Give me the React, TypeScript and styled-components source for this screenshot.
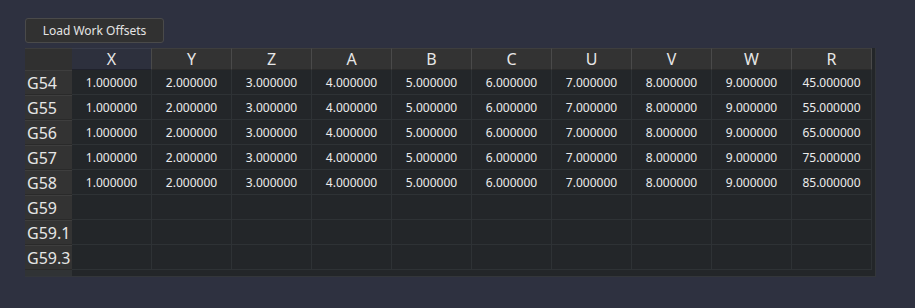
import React from 'react';
import styled, { createGlobalStyle } from 'styled-components';

const GlobalStyle = createGlobalStyle`
  html, body {
    margin: 0;
    padding: 0;
    background: #2e3140;
    font-family: "Noto Sans", "Open Sans", sans-serif;
  }
`;

const Page = styled.div`
  width: 915px;
  height: 308px;
  box-sizing: border-box;
  padding: 18px 0 0 25px;
  display: flex;
  flex-direction: column;
  align-items: flex-start;
  gap: 5px;
`;

const LoadButton = styled.button`
  width: 139px;
  height: 25px;
  box-sizing: border-box;
  background: #313131;
  border: 1px solid #4a4a4a;
  border-radius: 3px;
  color: #e4e4e4;
  font-family: inherit;
  font-size: 12px;
  padding: 0;
`;

const Frame = styled.div`
  width: 851px;
  height: 229px;
  box-sizing: border-box;
  background: #2b2e31;
  border: 1px solid #33363a;
  border-top: none;
  border-left: none;
`;

const Grid = styled.div`
  display: grid;
  grid-template-columns: 47px repeat(10, 80px);
  grid-template-rows: 22px repeat(8, 25px) 6px;
  background: #232629;
`;

const Corner = styled.div`
  background: #303030;
  border-top: 1px solid #3c3c3c;
`;

const ColHeader = styled.div<{ $active?: boolean }>`
  display: flex;
  align-items: center;
  justify-content: center;
  background: ${p => (p.$active ? '#2d303d' : '#333333')};
  border-top: 1px solid ${p => (p.$active ? '#393c4a' : '#3e3e3e')};
  border-right: 1px solid #4a4a4a;
  border-bottom: 1px solid ${p => (p.$active ? '#20222c' : '#2a2a2a')};
  box-sizing: border-box;
  color: #e6e6e6;
  font-size: 16px;
`;

const RowHeader = styled.div`
  display: flex;
  align-items: center;
  padding-left: 2px;
  background: #333333;
  border-top: 1px solid #3e3e3e;
  border-bottom: 1px solid #2a2a2a;
  box-sizing: border-box;
  color: #e6e6e6;
  font-size: 16px;
`;

const Cell = styled.div`
  display: flex;
  align-items: center;
  justify-content: center;
  border-right: 1px solid #2e3235;
  border-bottom: 1px solid #2e3235;
  box-sizing: border-box;
  color: #ececec;
  font-size: 12px;
`;

const FooterCorner = styled.div`
  background: #303335;
`;

const FooterStrip = styled.div`
  background: #232629;
  grid-column: span 10;
`;

const axes = ['X', 'Y', 'Z', 'A', 'B', 'C', 'U', 'V', 'W', 'R'];
const rows = ['G54', 'G55', 'G56', 'G57', 'G58', 'G59', 'G59.1', 'G59.3'];
const rValues: Record<string, number> = { G54: 45, G55: 55, G56: 65, G57: 75, G58: 85 };

const cellValue = (row: string, col: number) => {
  if (!(row in rValues)) return '';
  const v = col === 9 ? rValues[row] : col + 1;
  return v.toFixed(6);
};

const App: React.FC = () => {
  return (
    <>
      <GlobalStyle />
      <Page>
        <LoadButton>Load Work Offsets</LoadButton>
        <Frame>
          <Grid>
            <Corner />
            {axes.map((a, i) => (
              <ColHeader key={a} $active={i === 0}>{a}</ColHeader>
            ))}
            {rows.map(r => (
              <React.Fragment key={r}>
                <RowHeader>{r}</RowHeader>
                {axes.map((a, i) => (
                  <Cell key={a}>{cellValue(r, i)}</Cell>
                ))}
              </React.Fragment>
            ))}
            <FooterCorner />
            <FooterStrip />
          </Grid>
        </Frame>
      </Page>
    </>
  );
};

export default App;
